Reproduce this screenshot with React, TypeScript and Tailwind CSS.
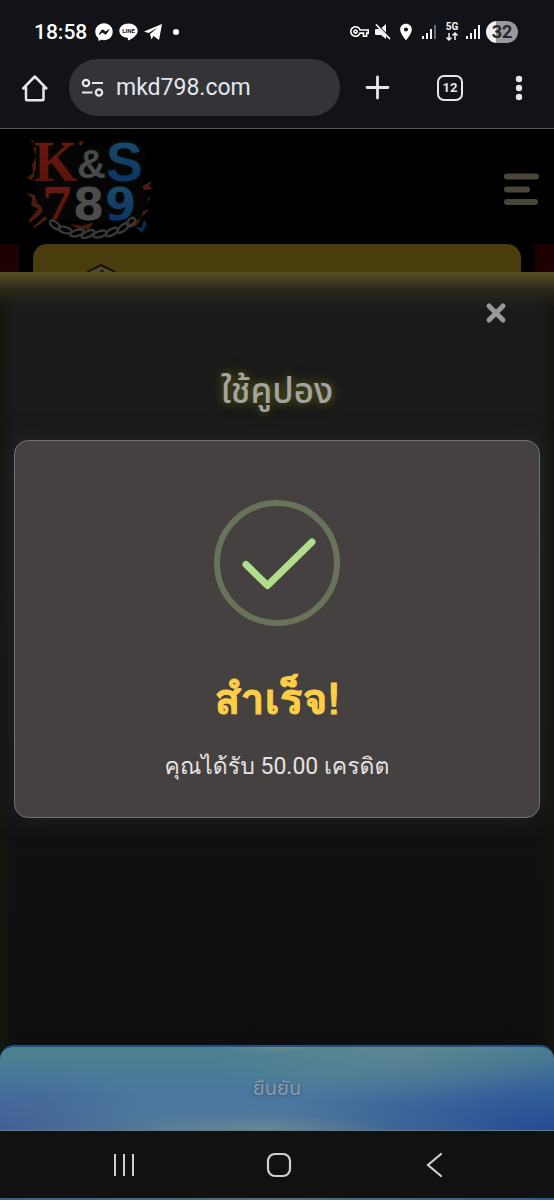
import type { ReactNode } from "react";
import { FaFacebookMessenger } from "react-icons/fa";
import { MdLocationOn, MdOutlineVpnKey } from "react-icons/md";

function Signal({ weak = false }: { weak?: boolean }) {
  return (
    <svg width="15" height="16" viewBox="0 0 15 16" aria-hidden="true" fill="#f4f4f6">
      <rect x="0" y="12" width="2" height="3" />
      <rect x="4" y="9" width="2" height="6" />
      <rect x="8" y="5" width="2" height="10" />
      <rect x="12" y="1" width="2" height="14" opacity={weak ? 0.4 : 1} />
    </svg>
  );
}

function StatusBar() {
  return (
    <div className="flex h-[59px] items-center justify-between pt-1 pr-9 pl-[34px] text-white">
      <div className="flex items-center">
        <span className="mr-2 font-['Roboto',sans-serif] text-[21px] leading-6 font-medium">18:58</span>
        <FaFacebookMessenger className="mr-1.5 size-[18px]" />
        <svg className="mr-1.5" width="19" height="18" viewBox="0 0 19 18" aria-hidden="true">
          <path d="M9.5 0.5C4.4 .5.3 3.700.3 7.700c0 3.600 3.300 6.500 7.700 7.100l1 .3-.2 2.500C12.400 16.200 18.700 12.500 18.700 7.700 18.700 3.700 14.600.5 9.500.5Z" fill="#fff" />
          <text x="9.5" y="10" textAnchor="middle" fontSize="6" fontWeight="700" fontFamily="Roboto, sans-serif" fill="#121318">LINE</text>
        </svg>
        <svg className="mr-2.5" width="19" height="18" viewBox="0 0 19 18" fill="#fff" aria-hidden="true">
          <path d="M0 8.500 18 1 15 17 9.500 13 7.500 16.500 6 11 14 4.500 4.500 10Z" />
        </svg>
        <span className="size-1.5 rounded-full bg-white" />
      </div>
      <div className="flex items-center">
        <MdOutlineVpnKey className="mr-1.5 size-[19px]" />
        <svg className="mr-[5px]" width="16" height="18" viewBox="0 0 16 18" fill="#f4f4f6" aria-hidden="true">
          <path d="M1 6h3.500L11 12.500V16L6 12H1a1 1 0 0 1-1-1V7a1 1 0 0 1 1-1ZM6.500 5 11 1v8.500Z" />
          <path d="m1.500 2 13 13.500" stroke="#f4f4f6" strokeWidth="1.800" strokeLinecap="round" />
        </svg>
        <MdLocationOn className="mr-1.5 size-5" />
        <Signal weak />
        <svg className="mr-[7px] ml-2" width="14" height="20" viewBox="0 0 14 20" aria-hidden="true">
          <text x="7" y="8" textAnchor="middle" fontSize="10" fontWeight="700" fontFamily="Roboto, sans-serif" fill="#f4f4f6">5G</text>
          <path d="M4 11v7M1.500 15.500 4 18l2.500-2.500M10 18v-7M7.500 13.500 10 11l2.500 2.500" fill="none" stroke="#f4f4f6" strokeWidth="1.500" />
        </svg>
        <Signal />
        <span className="ml-[5px] flex h-[22px] w-8 items-center justify-center rounded-full bg-[linear-gradient(90deg,#f0f0f1_32%,#98999c_32%)] font-['Roboto',sans-serif] text-lg leading-5 font-bold text-[#25262b]">32</span>
      </div>
    </div>
  );
}

function BrowserBar() {
  return (
    <div className="flex items-center border-b border-[#55565a] pr-[31px] pb-3 pl-[21px] text-[#e6e6ee]">
      <button type="button" aria-label="Home" className="mr-5">
        <svg width="28" height="30" viewBox="0 0 28 30" fill="none" stroke="currentColor" strokeWidth="2.500" strokeLinejoin="round" strokeLinecap="round" aria-hidden="true">
          <path d="M5 14.500V26.300q0 1 1 1H21.500q1 0 1-1V14.500M2.200 15.300 13.800 3.500 25.400 15.300M2.200 15.300H5M22.500 15.300h2.900" />
        </svg>
      </button>
      <div className="flex h-[57px] min-w-0 flex-1 items-center gap-3 rounded-full bg-[#333438] pl-3">
        <svg className="shrink-0" width="23" height="20" viewBox="0 0 23 20" fill="none" stroke="currentColor" strokeWidth="2.200" aria-hidden="true">
          <circle cx="5" cy="5" r="3.200" />
          <circle cx="18" cy="14.500" r="3.200" />
          <path d="M11 5h11M1 14.500h10.500" />
        </svg>
        <input aria-label="Address" readOnly value="mkd798.com" className="w-full min-w-0 bg-transparent font-['Roboto',sans-serif] text-[23px] leading-8 outline-none" />
      </div>
      <button type="button" aria-label="New tab" className="ml-[25px]">
        <svg width="25" height="25" viewBox="0 0 25 25" stroke="currentColor" strokeWidth="2.800" strokeLinecap="round" aria-hidden="true"><path d="M12.500 2v21M2 12.500h21" /></svg>
      </button>
      <button type="button" aria-label="Tabs" className="ml-[47px] flex size-[26px] items-center justify-center rounded-[7px] border-2 border-current font-['Roboto',sans-serif] text-[13px] leading-4 font-bold">12</button>
      <button type="button" aria-label="Menu" className="ml-[52px]">
        <svg width="8" height="26" viewBox="0 0 8 26" fill="currentColor" aria-hidden="true"><circle cx="4" cy="4" r="3.200" /><circle cx="4" cy="13" r="3.200" /><circle cx="4" cy="22" r="3.200" /></svg>
      </button>
    </div>
  );
}

function Logo() {
  return (
    <svg className="overflow-visible" width="140" height="112" viewBox="0 0 140 112" role="img" aria-label="K&S 789">
      <defs>
        <linearGradient id="red" x2="0" y2="1"><stop stopColor="#6b1a13" /><stop offset="1" stopColor="#581008" /></linearGradient>
        <linearGradient id="blue" x2="0" y2="1"><stop stopColor="#1d506b" /><stop offset="1" stopColor="#092c60" /></linearGradient>
      </defs>
      <g fill="#4a1c0e">
        <path d="m11 8 8 2-3 10 3 12-5 9 2 9-9-4 6-5-1-8 4-8ZM60 9l4 1-9 13 8 10-4 3-9-12ZM6 61l9 2 2 8 7 5-5 2-8-5 1-7ZM9 88l10-12 7-2-6 9-10 8ZM12 96l15-14 4 2-15 11ZM31 56l12-3 8 4-12 3ZM50 92l12 2 12-4-5 7-9 1ZM122 54l10-5-3 5 4 3-9 1ZM118 72l13-8-5 8-9 4ZM114 82l15-5-5 6-9 3ZM110 92l12-8-4 8-7 4Z" />
        <path d="m112 49 10-5-2 7-9 3ZM114 94l7 2 3-8 3 4-5 9Z" fill="#0b2b4e" />
      </g>
      <path d="M16 9h40l8 8 12-6 12 6 10-8h20l8 14-4 32 6 12-8 20-14 4-46-1-34-4-10-24Z" fill="#050505" />
      <g fontWeight="700" stroke="#060707" strokeWidth="5" strokeLinejoin="round" paintOrder="stroke">
        <text x="14" y="49" fontSize="56" fontFamily="'Liberation Serif', serif" fill="url(#red)">K</text>
        <text x="86" y="49" fontSize="55" fontFamily="'Liberation Sans', sans-serif" fill="url(#blue)">S</text>
        <text x="57" y="46" fontSize="40" fontFamily="'Liberation Sans', sans-serif" fill="#484949">&amp;</text>
        <text x="22" y="88" fontSize="45" fontFamily="'DejaVu Serif', serif" fill="url(#red)">7</text>
        <text x="53" y="88" fontSize="45" fontFamily="'DejaVu Sans', sans-serif" fill="#4b4c4c">8</text>
        <text x="85" y="88" fontSize="45" fontFamily="'DejaVu Sans', sans-serif" fill="url(#blue)">9</text>
      </g>
      <g fill="none" stroke="#363737" strokeWidth="2.500">
        <ellipse cx="35" cy="93" rx="6" ry="3" transform="rotate(38 35 93)" />
        <ellipse cx="45" cy="98" rx="7" ry="3" transform="rotate(15 45 98)" />
        <ellipse cx="57" cy="101" rx="7" ry="3" transform="rotate(-15 57 101)" />
        <ellipse cx="68" cy="102" rx="7" ry="3" transform="rotate(-25 68 102)" />
        <ellipse cx="80" cy="102" rx="7" ry="3" transform="rotate(-18 80 102)" />
        <ellipse cx="92" cy="100" rx="7" ry="3" transform="rotate(-28 92 100)" />
        <ellipse cx="103" cy="96" rx="7" ry="3" transform="rotate(-38 103 96)" />
        <ellipse cx="111" cy="90" rx="5" ry="3" transform="rotate(-50 111 90)" />
      </g>
    </svg>
  );
}

function SiteHeader() {
  return (
    <header className="bg-black">
      <div className="flex h-[115px] items-start justify-between pt-[3px] pr-3 pl-5">
        <Logo />
        <button type="button" aria-label="Site menu" className="mt-10">
          <svg width="40" height="34" viewBox="0 0 40 34" stroke="#4a4639" strokeWidth="6" strokeLinecap="round" aria-hidden="true">
            <path d="M5 4.500h29M5 17.500h20M5 30h28" />
          </svg>
        </button>
      </div>
      <div className="flex h-7 justify-between gap-3.5">
        <div className="w-[19px] bg-[#1e0101]" />
        <div className="flex flex-1 items-end rounded-t-[14px] bg-[#493c0d] pl-[54px]">
          <svg width="30" height="9" viewBox="0 0 30 9" aria-hidden="true">
            <path d="M0 9 14 2l14 7" fill="#4f4b36" stroke="#141208" strokeWidth="2" />
            <path d="m12 9 3-3 3 3" fill="#242016" />
          </svg>
        </div>
        <div className="w-[19px] bg-[#1e0101]" />
      </div>
    </header>
  );
}

function NavButton({ label, children }: { label: string; children: ReactNode }) {
  return (
    <button type="button" aria-label={label} className="flex size-10 items-center justify-center text-[#d0d0d0]">
      {children}
    </button>
  );
}

export default function App() {
  return (
    <div className="flex min-h-screen flex-col bg-[#121318]">
      <StatusBar />
      <BrowserBar />
      <SiteHeader />
      <main className="flex flex-1 flex-col bg-[linear-gradient(180deg,#5b4f25_0px,#443c20_8px,#2a2719_18px,#1b1b1b00_36px),linear-gradient(90deg,#14150f_0px,#14150f00_16px),linear-gradient(270deg,#14130d_0px,#14130d00_16px),linear-gradient(180deg,#1b1b1b_0%,#1a1a1a_22%,#0f0f0f_76%,#0e0e0e_100%)] font-['Noto_Sans_Thai','Noto_Sans','Roboto',sans-serif]">
        <div className="flex justify-end pt-[29px] pr-[46px]">
          <button type="button" aria-label="Close">
            <svg width="24" height="24" viewBox="0 0 24 24" stroke="#999" strokeWidth="5" strokeLinecap="round" aria-hidden="true"><path d="m5 5 14 14M19 5 5 19" /></svg>
          </button>
        </div>
        <h1 className="mt-[46px] text-center text-[35px] leading-[44px] font-medium text-[#a3a3a0] [text-shadow:0_0_8px_#55551c,0_0_14px_#40401a]">ใช้คูปอง</h1>
        <section className="mx-3.5 mt-[25px] flex h-[378px] flex-col items-center rounded-[14px] border border-[#73706f] bg-[#454140] pt-[58px] shadow-[0_0_24px_#242525]">
          <svg width="128" height="128" viewBox="0 0 128 128" fill="none" aria-hidden="true">
            <circle cx="64" cy="64" r="60" stroke="#697359" strokeWidth="6" />
            <path d="m33 65.500 21.500 21L99 43" stroke="#b1de8c" strokeWidth="7" strokeLinecap="round" strokeLinejoin="round" />
          </svg>
          <h2 className="mt-11 font-['Loma','Noto_Sans_Thai',sans-serif] text-[43px] leading-[56px] font-bold text-[#fdce46] [-webkit-text-stroke:1px_#fdce46]">สำเร็จ!</h2>
          <p className="mt-6 font-['Roboto','Loma','Noto_Sans_Thai',sans-serif] text-[23px] leading-8 text-[#e5e2e1]">คุณได้รับ 50.00 เครดิต</p>
        </section>
        <button type="button" className="mt-auto h-[86px] rounded-t-[14px] border-t-2 border-b border-t-[#234d8c] border-b-[#617d89] bg-[radial-gradient(ellipse_50px_5px_at_50%_0%,#8a898699,transparent),radial-gradient(ellipse_130px_16px_at_47%_100%,#89948f66,transparent),radial-gradient(ellipse_200px_60px_at_72%_0%,#5f8790cc,transparent),radial-gradient(ellipse_160px_70px_at_0%_100%,#3e5a96cc,transparent),radial-gradient(ellipse_280px_90px_at_100%_100%,#244b95,transparent),linear-gradient(180deg,#4c828f,#4a76a0_60%,#527c98)] text-xl leading-7 text-[#8b9bad] [text-shadow:0_1px_3px_#34506f]">ยืนยัน</button>
      </main>
      <nav aria-label="System" className="flex h-[67px] items-center justify-around border-t border-[#101010] bg-[#111] pr-[42px] pl-[46px]">
        <NavButton label="Recent apps">
          <svg width="24" height="24" viewBox="0 0 24 24" stroke="currentColor" strokeWidth="2"><path d="M3 1v22M12 1v22M21 1v22" /></svg>
        </NavButton>
        <NavButton label="Home screen">
          <svg width="26" height="26" viewBox="0 0 26 26" fill="none" stroke="currentColor" strokeWidth="2.200"><rect x="2" y="2" width="22" height="22" rx="7" /></svg>
        </NavButton>
        <NavButton label="Back">
          <svg width="24" height="26" viewBox="0 0 24 26" fill="none" stroke="currentColor" strokeWidth="2.200" strokeLinecap="round"><path d="M19 2 6 13l13 11" /></svg>
        </NavButton>
      </nav>
      <div className="h-0.5 bg-[linear-gradient(90deg,#3c5f8d,#536f78_50%,#345a92)]" />
    </div>
  );
}
